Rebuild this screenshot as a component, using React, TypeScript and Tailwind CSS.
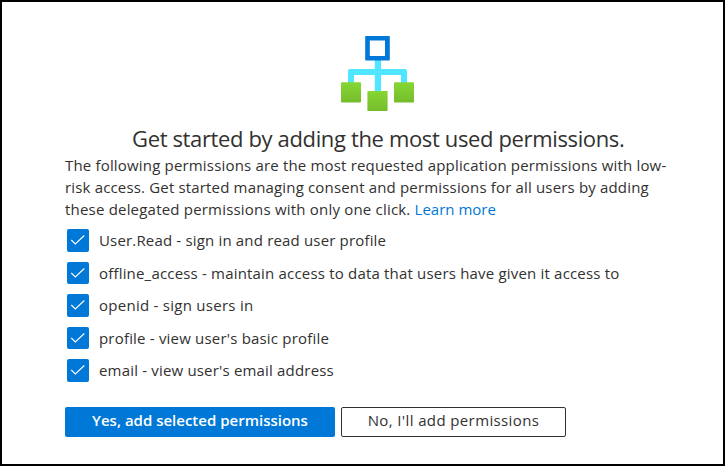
import React from "react";

const permissions = [
  { label: "User.Read - sign in and read user profile", spacing: "tracking-[0.17px]" },
  { label: "offline_access - maintain access to data that users have given it access to", spacing: "tracking-[0.187px]" },
  { label: "openid - sign users in", spacing: "tracking-[0.27px]" },
  { label: "profile - view user's basic profile", spacing: "tracking-[0.19px]" },
  { label: "email - view user's email address", spacing: "tracking-[0.18px]" },
];

function HierarchyIcon() {
  return (
    <svg width="74" height="76" viewBox="340 36 74 76" className="block">
      <defs>
        <linearGradient id="leaf" x1="0" y1="0" x2="0" y2="1">
          <stop offset="0" stopColor="#86d633" />
          <stop offset="1" stopColor="#76bc2d" />
        </linearGradient>
      </defs>
      <path d="M374.8 60h6.2v9h24a2 2 0 0 1 2 2v12h-6v-8h-20v17h-6.2V75H354v8h-6V71a2 2 0 0 1 2-2h24.8z" fill="#50e6ff" />
      <path fillRule="evenodd" d="M366 36h23a.8.8 0 0 1 .8.8v23a.8.8 0 0 1-.8.8h-23a.8.8 0 0 1-.8-.8v-23a.8.8 0 0 1 .8-.8zM369.8 40.6V56H385V40.6z" fill="#0078d7" />
      <rect x="341" y="82.3" width="20" height="20.3" rx="0.8" fill="url(#leaf)" />
      <rect x="367.4" y="91" width="20.2" height="20" rx="0.8" fill="url(#leaf)" />
      <rect x="394" y="82.3" width="20" height="20.3" rx="0.8" fill="url(#leaf)" />
    </svg>
  );
}

function Checkbox() {
  return (
    <span className="flex h-[22.4px] w-[22px] shrink-0 items-center justify-center rounded-[2px] bg-[#0078d7]">
      <svg width="16" height="12" viewBox="0 0 16 12" fill="none" stroke="#fff" strokeWidth="1.1">
        <path d="M1.3 6 5.3 10 14.3 1.5" />
      </svg>
    </span>
  );
}

export default function App() {
  return (
    <main className="flex h-[466px] w-[725px] flex-col border-2 border-black bg-white pt-[34px] pl-[63px] font-['Open_Sans',sans-serif] text-[15px] text-[#323130]">
      <div className="pl-[275px]">
        <HierarchyIcon />
      </div>
      <h1 className="mt-[10px] h-[32px] pl-[67px] text-[22px] leading-[32px] tracking-[-0.36px] whitespace-nowrap">
        Get started by adding the most used permissions.
      </h1>
      <div className="leading-[22px] whitespace-nowrap">
        <p className="tracking-[0.175px]">The following permissions are the most requested application permissions with low-</p>
        <p className="tracking-[0.165px]">risk access. Get started managing consent and permissions for all users by adding</p>
        <p className="tracking-[0.2px]">
          these delegated permissions with only one click. <a className="tracking-[0px] text-[#0078d7]">Learn more</a>
        </p>
      </div>
      <ul className="mt-[9.2px] flex flex-col gap-[10.1px] pl-[2px]">
        {permissions.map((p) => (
          <li key={p.label} className="flex h-[22.4px] items-center gap-[10px] whitespace-nowrap">
            <Checkbox />
            <span className={p.spacing}>{p.label}</span>
          </li>
        ))}
      </ul>
      <div className="mt-[25px] flex gap-[6px] whitespace-nowrap">
        <button className="h-[30px] w-[270px] rounded-[2px] bg-[#0078d7] pb-[2px] font-semibold text-white">Yes, add selected permissions</button>
        <button className="h-[30px] w-[225px] rounded-[2px] border border-[#323130] pb-[2px] tracking-[0.38px]">No, I'll add permissions</button>
      </div>
    </main>
  );
}
